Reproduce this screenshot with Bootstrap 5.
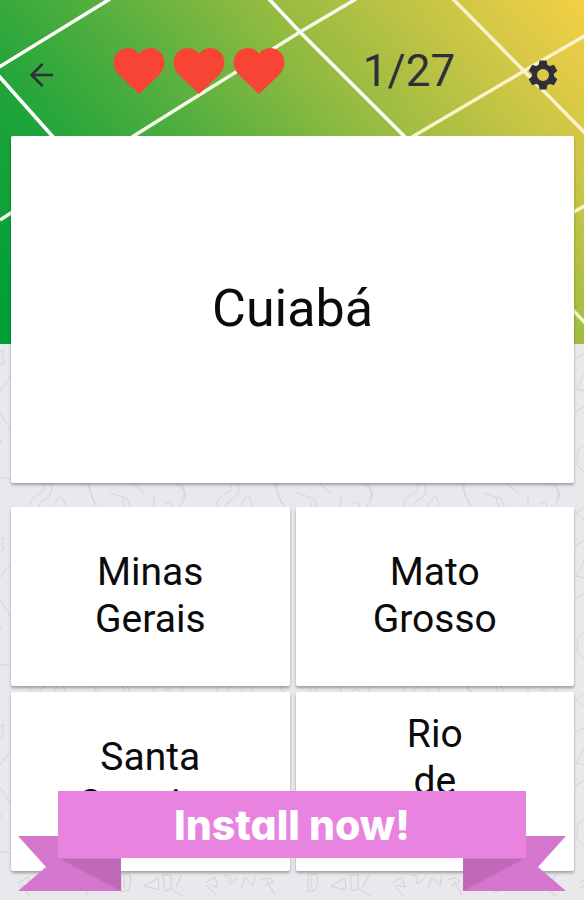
<!DOCTYPE html>
<html lang="pt">
<head>
<meta charset="utf-8">
<meta name="viewport" content="width=device-width, initial-scale=1">
<title>Quiz</title>
<link href="https://cdn.jsdelivr.net/npm/bootstrap@5.3.0/dist/css/bootstrap.min.css" rel="stylesheet">
<style>
body{font-family:Roboto,"Liberation Sans",sans-serif;background:#e9e9ed;color:#0b0b0d}
.screen{min-height:100vh;overflow:hidden;isolation:isolate}
.backdrop{position:absolute;inset:0;z-index:-1;width:100%;height:100%}
.topbar{height:136px;padding:14px 23px 0 24px;color:#2f2f3b}
.icon-btn{width:36px;height:36px;color:#2f2f3b}
.hearts{gap:8px;margin-left:53px;margin-bottom:8px}
.score{font-size:44px;font-weight:400;line-height:56px;margin-bottom:8px;padding:0 42px 0 50px}
.board{padding:0 10px 29px 11px}
.tile{background:#fff;border:0;border-radius:2px;box-shadow:0 2px 3px rgba(0,0,0,.32);color:#0b0b0d}
.question{min-height:347px;font-size:52px;margin-bottom:24px}
.answers{--bs-gutter-x:6px;--bs-gutter-y:6px}
.answer{min-height:179px;font-size:39px;line-height:47px;padding-bottom:2px}
.promo{position:absolute;left:18px;right:18px;bottom:8px;height:101px}
.tails{position:absolute;bottom:0;width:103px;height:57px}
.promo-btn{position:absolute;left:40px;right:40px;top:0;height:67px;border:0;background:#e884e0;color:#fff;font:800 41px Inter,sans-serif;font-feature-settings:"cv11"}
</style>
<script src="https://cdn.jsdelivr.net/npm/bootstrap@5.3.0/dist/js/bootstrap.bundle.min.js"></script>
</head>
<body>
<div class="screen position-relative d-flex flex-column">
<svg class="backdrop" aria-hidden="true">
<defs>
<linearGradient id="field" gradientUnits="userSpaceOnUse" x1="60" y1="370" x2="560" y2="-40"><stop offset="0" stop-color="#00a038"/><stop offset=".2" stop-color="#1ea43a"/><stop offset=".38" stop-color="#4fae3e"/><stop offset=".58" stop-color="#8dba40"/><stop offset=".82" stop-color="#cdc646"/><stop offset="1" stop-color="#f7d045"/></linearGradient>
<pattern id="doodle" width="187" height="187" x="0" y="344" patternUnits="userSpaceOnUse">
<path fill="none" stroke="#d3d3d8" d="M0 8l4-2-2 7 2 6-4 1M0 47l11-15M0 69l11 17M0 96l2 2-2 2M0 134q6-2 11 2M30 162q-2-7 13-15l1-8q8-2 8 7-1 7-11 12l-5 10M53 162l8-11 5 11M86 134q6 20 10 28M90 139q-1 16 8 22M110 149l17 6 4 9M122 155l3 8M131 138l14 12M154 163v-13M165 160q7-5 8 3M176 140q12 6 9 14l-6 10M181 140q6 8 1 16M24 163l-9 6 9 8M14 15l10-6M14 68l10-6M16 44l8-16M15 45l9 2M24 100l-7 6-1 15 8 8"/>
</pattern>
<pattern id="letters" width="187" height="40" x="0" y="872" patternUnits="userSpaceOnUse">
<path fill="none" stroke="#cfcfd5" d="M121 3l8-1q4 8-1 16l-7 2zM124 4v13M144 14l14-8 1 12zM163 3h8v14l-6 2zM170 16l13 8M176 15l6-13M18 11l10-6 3 10-9-2M20 14l10 10M37 4q8-3 6 5t8-4M54 17l4-12 8 9 2-11M74 8q9-5 12 2l-9 4M80 9l8 14"/>
</pattern>
</defs>
<rect width="100%" height="100%" fill="#e9e9ed"/><rect width="100%" height="866" fill="url(#doodle)"/>
<rect y="872" width="100%" height="40" fill="url(#letters)"/>
<rect width="100%" height="344" fill="url(#field)"/>
<g fill="none" stroke="#f3fae8" stroke-width="3.500"><path d="M-4 69L110-1M-2 75L54 138M268-2L300 32L406 138" stroke="#fff"/><path d="M132 137L300 32L356-1M0 220L14 211"/><path d="M452-2L524 71L586 134M412 137L524 71L588 34M570 214L588 204M570 307L588 326" stroke="#fbf3c8"/></g>
</svg>
<header class="topbar d-flex align-items-center">
<button type="button" class="icon-btn btn p-0 border-0 d-flex align-items-center justify-content-center" aria-label="Back"><svg width="24" height="24" viewBox="0 0 24 24" fill="none" stroke="currentColor" stroke-width="2.600"><path d="M23 12H2M12.500 1L1.500 12L12.500 23"/></svg></button>
<div class="hearts d-flex" role="img" aria-label="3 lives">
<svg width="52" height="48" viewBox="0 0 52 48" fill="#f74434"><path id="heart" d="M26 47L6 28C-1 21-1 10 5 5C12-1 21 0 26 7C31 0 40-1 47 5C53 10 53 21 46 28Z"/></svg>
<svg width="52" height="48" viewBox="0 0 52 48" fill="#f74434"><use href="#heart"/></svg>
<svg width="52" height="48" viewBox="0 0 52 48" fill="#f74434"><use href="#heart"/></svg>
</div>
<div class="score flex-grow-1 text-center">1/27</div>
<button type="button" class="icon-btn btn p-0 border-0 d-flex align-items-center justify-content-center" aria-label="Settings"><svg width="30" height="30" viewBox="-15 -15 30 30"><g fill="currentColor"><path fill-rule="evenodd" d="M0-11a11 11 0 1 0 0 22a11 11 0 1 0 0-22M0-6a6 6 0 1 1 0 12a6 6 0 1 1 0-12"/><g id="teeth"><path id="tooth" d="M-4.500-9L-3.500-14.500H3.500L4.500-9ZM-4.500 9L-3.500 14.500H3.500L4.500 9Z"/><use href="#tooth" transform="rotate(60)"/><use href="#tooth" transform="rotate(120)"/></g></g></svg></button>
</header>
<main class="board flex-grow-1 d-flex flex-column">
<h1 class="question tile d-flex align-items-center justify-content-center fw-normal flex-grow-1">Cuiabá</h1>
<div class="answers row">
<div class="col-6"><button type="button" class="answer tile w-100">Minas<br>Gerais</button></div>
<div class="col-6"><button type="button" class="answer tile w-100">Mato<br>Grosso</button></div>
<div class="col-6"><button type="button" class="answer tile w-100">Santa<br>Catarina</button></div>
<div class="col-6"><button type="button" class="answer tile w-100">Rio<br>de<br>&nbsp;</button></div>
</div>
</main>
<div class="promo">
<svg class="tails start-0" viewBox="0 0 103 57"><path d="M0 1H103V56H0L28 32Z" fill="#d576cd"/><path d="M42 24H103V56Z" fill="#c069b8"/></svg>
<svg class="tails end-0" viewBox="0 0 103 57"><path d="M103 1H0V56H103L75 32Z" fill="#d576cd"/><path d="M61 24H0V56Z" fill="#c069b8"/></svg>
<button type="button" class="promo-btn">Install now!</button>
</div>
</div>
</body>
</html>
